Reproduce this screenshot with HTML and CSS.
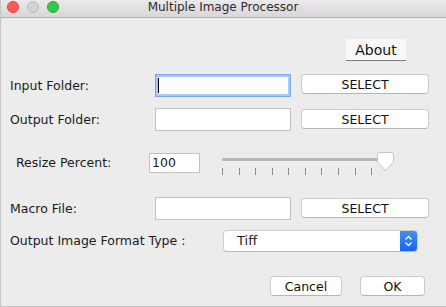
FILE: index.html
```html
<!DOCTYPE html>
<html lang="en">
<head>
    <meta charset="UTF-8">
    <title>Multiple Image Processor</title>
    <link rel="stylesheet" href="styles.css">
</head>
<body>
    <div class="window">
        <div class="titlebar">
            <div class="lights">
                <span class="light red"></span>
                <span class="light gray"></span>
                <span class="light green"></span>
            </div>
            <div class="title">Multiple Image Processor</div>
            <div></div>
        </div>

        <div class="content">
            <div class="about-row">
                <button class="about-button">About</button>
            </div>

            <div class="row input-row">
                <label class="label">Input Folder:</label>
                <div class="field focused"><span class="caret"></span></div>
                <button class="mac-button">SELECT</button>
            </div>

            <div class="row output-row">
                <label class="label">Output Folder:</label>
                <div class="field"></div>
                <button class="mac-button">SELECT</button>
            </div>

            <div class="resize-row">
                <label class="label resize-label">Resize Percent:</label>
                <div class="small-field">100</div>
                <svg class="slider" width="175" height="25" viewBox="0 0 175 25">
                    <rect x="0" y="7" width="160" height="3" rx="1.5" fill="#b7b7b7"/>
                    <g stroke="#8a8a8a" stroke-width="1">
                        <line x1="0.5" y1="17" x2="0.5" y2="24"/>
                        <line x1="17.5" y1="17" x2="17.5" y2="24"/>
                        <line x1="33.5" y1="17" x2="33.5" y2="24"/>
                        <line x1="50.5" y1="17" x2="50.5" y2="24"/>
                        <line x1="66.5" y1="17" x2="66.5" y2="24"/>
                        <line x1="83.5" y1="17" x2="83.5" y2="24"/>
                        <line x1="99.5" y1="17" x2="99.5" y2="24"/>
                        <line x1="116.5" y1="17" x2="116.5" y2="24"/>
                        <line x1="133.5" y1="17" x2="133.5" y2="24"/>
                        <line x1="149.5" y1="17" x2="149.5" y2="24"/>
                    </g>
                    <path d="M155.5,3.5 Q155.5,1.5 157.5,1.5 L169.5,1.5 Q171.5,1.5 171.5,3.5 L171.5,11 L163.5,19.5 L155.5,11 Z" fill="#ffffff" stroke="#c4c4c4" stroke-width="1"/>
                </svg>
            </div>

            <div class="row macro-row">
                <label class="label">Macro File:</label>
                <div class="field"></div>
                <button class="mac-button">SELECT</button>
            </div>

            <div class="format-row">
                <label class="label">Output Image Format Type :</label>
                <div class="popup">
                    <span class="popup-text">Tiff</span>
                    <span class="stepper">
                        <svg width="9" height="12" viewBox="0 0 9 12">
                            <path d="M1.5,4.5 L4.5,1.5 L7.5,4.5" fill="none" stroke="#ffffff" stroke-width="1.4"/>
                            <path d="M1.5,7.5 L4.5,10.5 L7.5,7.5" fill="none" stroke="#ffffff" stroke-width="1.4"/>
                        </svg>
                    </span>
                </div>
            </div>

            <div class="footer">
                <button class="mac-button cancel-button">Cancel</button>
                <button class="mac-button ok-button">OK</button>
            </div>
        </div>
    </div>
</body>
</html>
```

FILE: styles.css
```css
body {
    margin: 0;
    padding: 0;
    font-family: "DejaVu Sans", "Liberation Sans", sans-serif;
    font-size: 12.5px;
    color: #1a1a1a;
}
.window {
    width: 446px;
    height: 307px;
    box-sizing: border-box;
    background-color: #ececec;
    border-left: 1px solid #c6c6c6;
    border-bottom: 1px solid #c6c6c6;
    overflow: hidden;
}
.titlebar {
    height: 17px;
    margin-left: -1px;
    display: grid;
    grid-template-columns: 1fr auto 1fr;
    align-items: start;
    background: linear-gradient(#ebe9eb, #d8d6d8);
    border-bottom: 1px solid #b3b3b3;
}
.lights {
    display: flex;
    gap: 8px;
    padding: 1px 0 0 7px;
}
.light {
    width: 12px;
    height: 12px;
    box-sizing: border-box;
    border-radius: 50%;
}
.red {
    background-color: #fc5a55;
    border: 1px solid #e0443f;
}
.gray {
    background-color: #d2d2d2;
    border: 1px solid #bcbcbc;
}
.green {
    background-color: #35c84b;
    border: 1px solid #25a938;
}
.title {
    font-size: 12px;
    line-height: 15px;
    color: #2c2c2c;
}
.content {
    padding: 0 17px 0 9px;
}
.about-row {
    display: flex;
    justify-content: flex-end;
    margin-top: 21px;
    padding-right: 23px;
}
.about-button {
    width: 60px;
    height: 22px;
    padding: 0;
    border: none;
    border-bottom: 1px solid #7c7c7c;
    background-color: #f7f7f7;
    font-family: inherit;
    font-size: 14px;
    color: #111;
}
.row {
    display: grid;
    grid-template-columns: 135px 136px 128px;
    column-gap: 10px;
    align-items: start;
}
.input-row {
    margin-top: 13px;
}
.output-row {
    margin-top: 11px;
}
.macro-row {
    margin-top: 21px;
}
.label {
    line-height: 23px;
}
.field {
    height: 23px;
    box-sizing: border-box;
    background-color: #ffffff;
    border: 1px solid #c2c2c2;
    display: flex;
    align-items: center;
}
.field.focused {
    border-color: #7ea9e6;
    box-shadow: inset 0 0 0 2px #a9c9f2;
}
.caret {
    width: 1px;
    height: 15px;
    margin-left: 2px;
    background-color: #000;
}
.mac-button {
    height: 20px;
    padding: 0;
    box-sizing: border-box;
    margin-top: 1px;
    background-color: #ffffff;
    border: 1px solid #cbcbcb;
    border-bottom-color: #b5b5b5;
    border-radius: 4px;
    font-family: inherit;
    font-size: 12.5px;
    color: #111;
}
.input-row .mac-button {
    margin-top: 0;
}
.resize-row {
    display: flex;
    align-items: flex-start;
    margin-top: 20px;
    height: 25px;
}
.resize-label {
    width: 133px;
    padding-left: 6px;
    line-height: 24px;
}
.small-field {
    width: 51px;
    height: 20px;
    margin-top: 2px;
    box-sizing: border-box;
    background-color: #ffffff;
    border: 1px solid #c2c2c2;
    padding-left: 2px;
    line-height: 18px;
}
.slider {
    display: block;
    margin-left: 22px;
}
.format-row {
    display: flex;
    align-items: center;
    margin-top: 9px;
}
.format-row .label {
    width: 213px;
}
.popup {
    width: 195px;
    height: 22px;
    box-sizing: border-box;
    display: flex;
    align-items: stretch;
    background-color: #ffffff;
    border: 1px solid #cfcfcf;
    border-bottom-color: #b8b8b8;
    border-radius: 4px;
    overflow: hidden;
}
.popup-text {
    flex: 1;
    padding-left: 13px;
    line-height: 19px;
    font-size: 13px;
}
.stepper {
    width: 17px;
    display: flex;
    align-items: center;
    justify-content: center;
    background: linear-gradient(#3f8ef9, #1865f0);
}
.footer {
    display: flex;
    justify-content: flex-end;
    gap: 18px;
    margin-top: 23px;
    padding-right: 4px;
}
.cancel-button {
    width: 72px;
}
.ok-button {
    width: 65px;
}
```
